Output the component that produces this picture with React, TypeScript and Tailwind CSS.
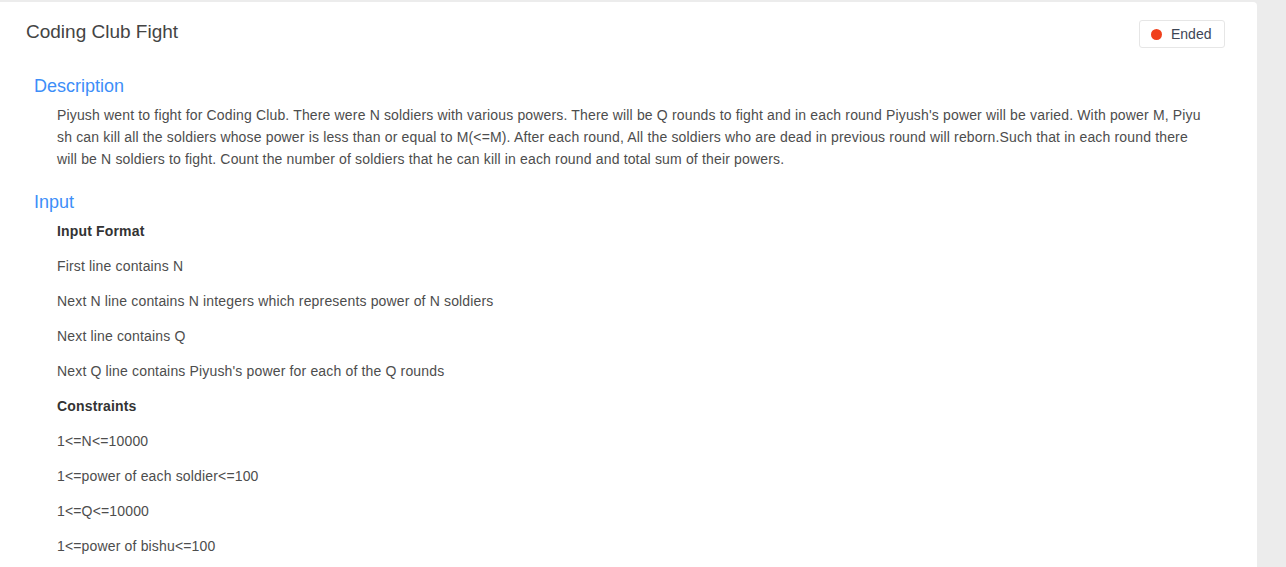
export default function App() {
  const inputLines = [
    { text: "Input Format", bold: true },
    { text: "First line contains N" },
    { text: "Next N line contains N integers which represents power of N soldiers" },
    { text: "Next line contains Q" },
    { text: "Next Q line contains Piyush's power for each of the Q rounds" },
    { text: "Constraints", bold: true },
    { text: "1<=N<=10000" },
    { text: "1<=power of each soldier<=100" },
    { text: "1<=Q<=10000" },
    { text: "1<=power of bishu<=100" },
  ];

  return (
    <div className="flex h-[567px] w-full overflow-hidden bg-[#ececec] pt-[2px] font-['Liberation_Sans',Arial,sans-serif]">
      <div className="w-[1257px] shrink-0 rounded-tr-[4px] bg-white">
        {/* header */}
        <div className="flex items-start justify-between pl-[26px] pr-[32px]">
          <h2 className="mt-[18px] text-[19px] leading-[24px] text-[#444]">Coding Club Fight</h2>
          <div className="mt-[18px] flex h-[28px] w-[86px] items-center gap-[9px] rounded-[3px] border border-[#e6e6e6] pl-[11px]">
            <span className="h-[11px] w-[11px] rounded-full bg-[#f0401c]" />
            <span className="text-[14px] text-[#3d4556]">Ended</span>
          </div>
        </div>

        {/* description */}
        <h3 className="ml-[34px] mt-[26px] text-[18px] leading-[24px] text-[#3d8ef8]">Description</h3>
        <p className="ml-[57px] mt-[6px] w-[1144px] break-all text-[14px] leading-[22px] tracking-[0.16px] text-[#4d4d4d]">
          Piyush went to fight for Coding Club. There were N soldiers with various powers. There will be Q rounds to fight and in each round Piyush's power will be varied. With power M, Piyush can kill all the soldiers whose power is less than or equal to M(&lt;=M). After each round, All the soldiers who are dead in previous round will reborn.Such that in each round there will be N soldiers to fight. Count the number of soldiers that he can kill in each round and total sum of their powers.
        </p>

        {/* input */}
        <h3 className="ml-[34px] mt-[20px] text-[18px] leading-[24px] text-[#3d8ef8]">Input</h3>
        <div className="ml-[57px] mt-[6px]">
          {inputLines.map((line, i) => (
            <p
              key={i}
              className={
                line.bold
                  ? "mb-[13px] text-[14px] font-bold leading-[22px] tracking-[0.16px] text-[#333]"
                  : "mb-[13px] text-[14px] leading-[22px] tracking-[0.16px] text-[#4d4d4d]"
              }
            >
              {line.text}
            </p>
          ))}
        </div>
      </div>
    </div>
  );
}
